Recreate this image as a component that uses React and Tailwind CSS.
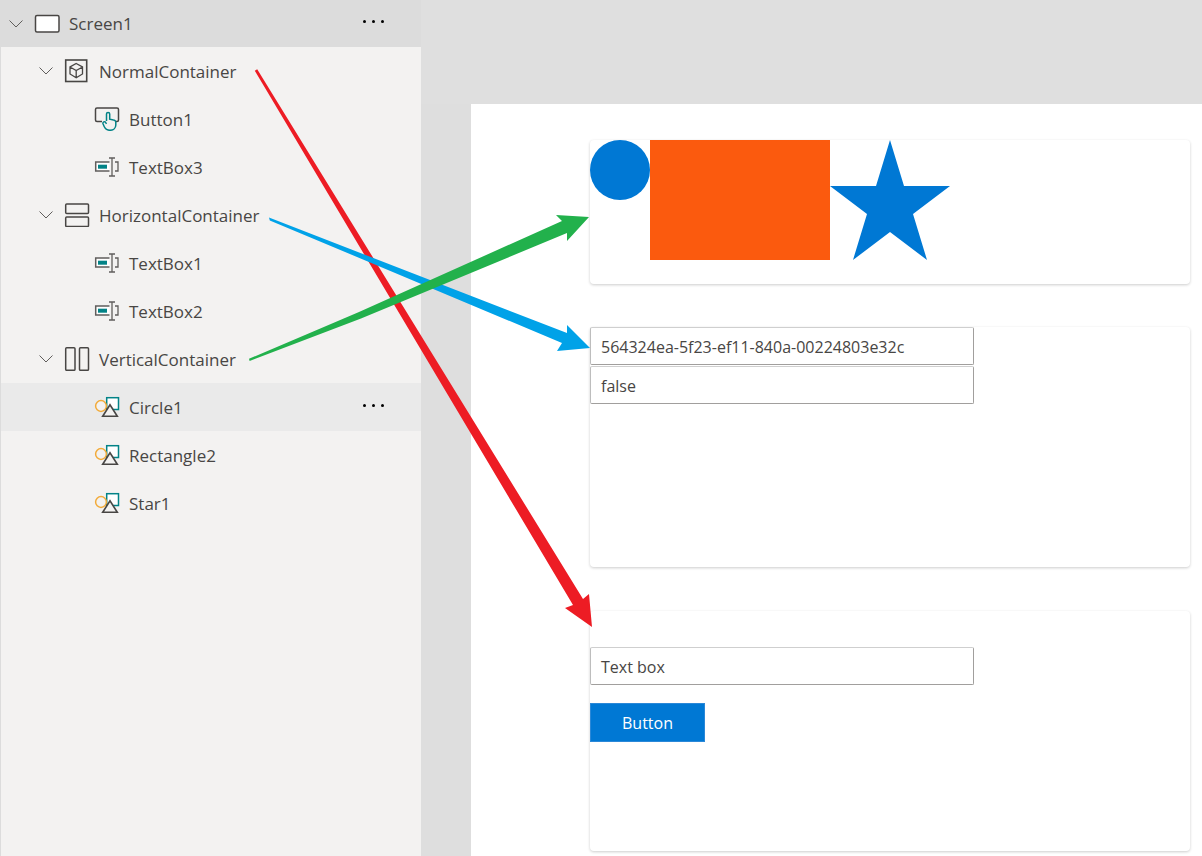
const FONT = 'font-["Open_Sans",sans-serif]';

function Chevron() {
  return (
    <svg width="16" height="16" viewBox="0 0 16 16" fill="none" stroke="#605e5c" strokeWidth="1">
      <path d="M1.5 4.5 L8 11 L14.5 4.5" />
    </svg>
  );
}

function ScreenIcon() {
  return (
    <svg width="26" height="20" viewBox="0 0 26 20" fill="#fff" stroke="#484644" strokeWidth="1.5">
      <rect x="1.5" y="1.5" width="23.5" height="16.5" rx="1.5" />
    </svg>
  );
}

function BoxIcon() {
  return (
    <svg width="24" height="24" viewBox="0 0 24 24" fill="none" stroke="#484644">
      <rect x="1.7" y="1" width="21" height="21.5" strokeWidth="1.6" />
      <path d="M12.2 4.5 L18.5 8 V15 L12.2 18.8 L6 15 V8 Z M6 8 L12.2 11.5 L18.5 8 M12.2 11.5 V18.8" strokeWidth="1.3" />
    </svg>
  );
}

function HorizontalIcon() {
  return (
    <svg width="26" height="24" viewBox="0 0 26 24" fill="none" stroke="#484644" strokeWidth="1.5">
      <rect x="1.7" y="1" width="22.8" height="9.5" rx="1" />
      <rect x="1.7" y="14" width="22.8" height="9.5" rx="1" />
    </svg>
  );
}

function VerticalIcon() {
  return (
    <svg width="26" height="24" viewBox="0 0 26 24" fill="none" stroke="#484644" strokeWidth="1.5">
      <rect x="1.7" y="0.8" width="9.3" height="22.5" rx="1" />
      <rect x="15.5" y="0.8" width="9" height="22.5" rx="1" />
    </svg>
  );
}

function ButtonIcon() {
  return (
    <svg width="26" height="24" viewBox="0 0 26 24" fill="none">
      <path d="M8 14.5 H3 A1.5 1.5 0 0 1 1.5 13 V2.5 A1.5 1.5 0 0 1 3 1 H23 A1.5 1.5 0 0 1 24.5 2.5 V13 A1.5 1.5 0 0 1 23 14.5 H22" stroke="#484644" strokeWidth="1.5" />
      <path d="M12.5 14 V7 A1.6 1.6 0 0 1 15.7 7 V12.2 L19.5 13 A2.4 2.4 0 0 1 21.8 15.5 V18 C21.8 21 19.5 23.3 16 23.3 C13 23.3 11.2 21.8 10.3 19.8 L9 16.8 C8.5 15 10.8 14 11.6 15.4 L12.5 16.8" fill="#f3f2f1" stroke="#038387" strokeWidth="1.5" />
    </svg>
  );
}

function TextBoxIcon() {
  return (
    <svg width="26" height="20" viewBox="0 0 26 20" fill="none">
      <path d="M15.5 5 H1.7 V14 H15.5" fill="#fff" stroke="#605e5c" strokeWidth="1.5" />
      <rect x="4" y="7.7" width="9" height="4" fill="#038387" />
      <path d="M15 1 H21 M18 1 V19 M15 19 H21 M21 5 H24 V14 H21" stroke="#605e5c" strokeWidth="1.3" />
    </svg>
  );
}

function ShapesIcon() {
  return (
    <svg width="26" height="24" viewBox="0 0 26 24" fill="none">
      <rect x="12.7" y="2.7" width="11.8" height="11.8" fill="#fff" stroke="#038387" strokeWidth="1.5" />
      <circle cx="7" cy="11" r="5.4" fill="#f3f2f1" stroke="#f2ab3a" strokeWidth="1.5" />
      <path d="M8.7 21.3 L16 9.8 L23.3 21.3 Z" fill="#f3f2f1" stroke="#484644" strokeWidth="1.6" />
    </svg>
  );
}

function Dots() {
  return (
    <div className="ml-auto mr-[37px] mb-1 flex gap-[6px]">
      <span className="h-[3px] w-[3px] rounded-full bg-black" />
      <span className="h-[3px] w-[3px] rounded-full bg-black" />
      <span className="h-[3px] w-[3px] rounded-full bg-black" />
    </div>
  );
}

function Row({ depth, icon, label, chevron, dots, className }) {
  const indent = depth === 0 ? 'pl-[7px]' : depth === 1 ? 'pl-[37px]' : 'pl-[93px]';
  return (
    <div className={`flex h-12 items-center ${indent} ${className || ''}`}>
      {chevron && <div className="mr-[10px] flex w-4 shrink-0"><Chevron /></div>}
      <div className="flex w-[35px] shrink-0">{icon}</div>
      <span className="text-[17px] leading-none text-[#484644]">{label}</span>
      {dots && <Dots />}
    </div>
  );
}

function TextInput({ value }) {
  return (
    <div className="flex h-[38px] w-[384px] items-center rounded-[2px] border border-[#a19f9d] border-t-[#cfcfcf] border-l-[#bdbdbd] bg-white pl-[10px] pt-[2px] text-[16px] text-[#484644]">
      {value}
    </div>
  );
}

function Card({ className, children }) {
  return (
    <div className={`w-[600px] rounded-[4px] bg-white shadow-[0_1px_3px_rgba(0,0,0,0.2)] ${className}`}>
      {children}
    </div>
  );
}

function Arrows() {
  return (
    <svg className="pointer-events-none absolute left-0 top-0" width="1202" height="856" viewBox="0 0 1202 856">
      <polygon fill="#ed1c24" points="254.8,70.8 257.2,69.2 583,599 589,594 592,627 565,608 573,605" />
      <polygon fill="#00a2e8" points="269,217.6 269.8,220.4 562,343 557,351 590,348 567,325 567,333" />
      <polygon fill="#22b14c" points="249,358.8 249.6,361 361,318.5 567,233 567,241 589,217 556,215 562,221 359,312" />
    </svg>
  );
}

export default function App() {
  return (
    <div className={`relative flex h-[856px] w-[1202px] overflow-hidden bg-[#dfdfdf] ${FONT}`}>
      <aside className="h-full w-[421px] shrink-0 border-l border-[#dcdcdc] bg-[#f3f2f1]">
        <Row className="bg-[#dcdcdc] !h-[47px]" depth={0} chevron icon={<ScreenIcon />} label="Screen1" dots />
        <Row depth={1} chevron icon={<BoxIcon />} label="NormalContainer" />
        <Row depth={2} icon={<ButtonIcon />} label="Button1" />
        <Row depth={2} icon={<TextBoxIcon />} label="TextBox3" />
        <Row depth={1} chevron icon={<HorizontalIcon />} label="HorizontalContainer" />
        <Row depth={2} icon={<TextBoxIcon />} label="TextBox1" />
        <Row depth={2} icon={<TextBoxIcon />} label="TextBox2" />
        <Row depth={1} chevron icon={<VerticalIcon />} label="VerticalContainer" />
        <Row className="bg-[#eaeaea]" depth={2} icon={<ShapesIcon />} label="Circle1" dots />
        <Row depth={2} icon={<ShapesIcon />} label="Rectangle2" />
        <Row depth={2} icon={<ShapesIcon />} label="Star1" />
      </aside>

      <div className="flex flex-1 flex-col">
        <div className="h-[104px] shrink-0" />
        <div className="flex-1 bg-[#dedede] pl-[50px]">
          <main className="flex h-full flex-col gap-[43px] bg-white pl-[119px] pt-[36px]">
            <Card className="flex h-[144px] items-start">
              <div className="h-[60px] w-[60px] rounded-full bg-[#0078d4]" />
              <div className="h-[120px] w-[180px] bg-[#fb5a0e]" />
              <svg width="120" height="120" viewBox="0 0 120 120">
                <polygon fill="#0078d4" points="60,0 74,46 120,46 83,74 97,120 60,92 23,120 37,74 0,46 46,46" />
              </svg>
            </Card>
            <Card className="flex h-[240px] flex-col gap-px">
              <TextInput value="564324ea-5f23-ef11-840a-00224803e32c" />
              <TextInput value="false" />
            </Card>
            <Card className="mt-px h-[240px] pt-[36px]">
              <TextInput value="Text box" />
              <div className="mt-[18px] flex h-[39px] w-[115px] items-center justify-center border border-[#2b88d8] bg-[#0078d4] text-[16px] text-white">
                Button
              </div>
            </Card>
          </main>
        </div>
      </div>

      <Arrows />
    </div>
  );
}
